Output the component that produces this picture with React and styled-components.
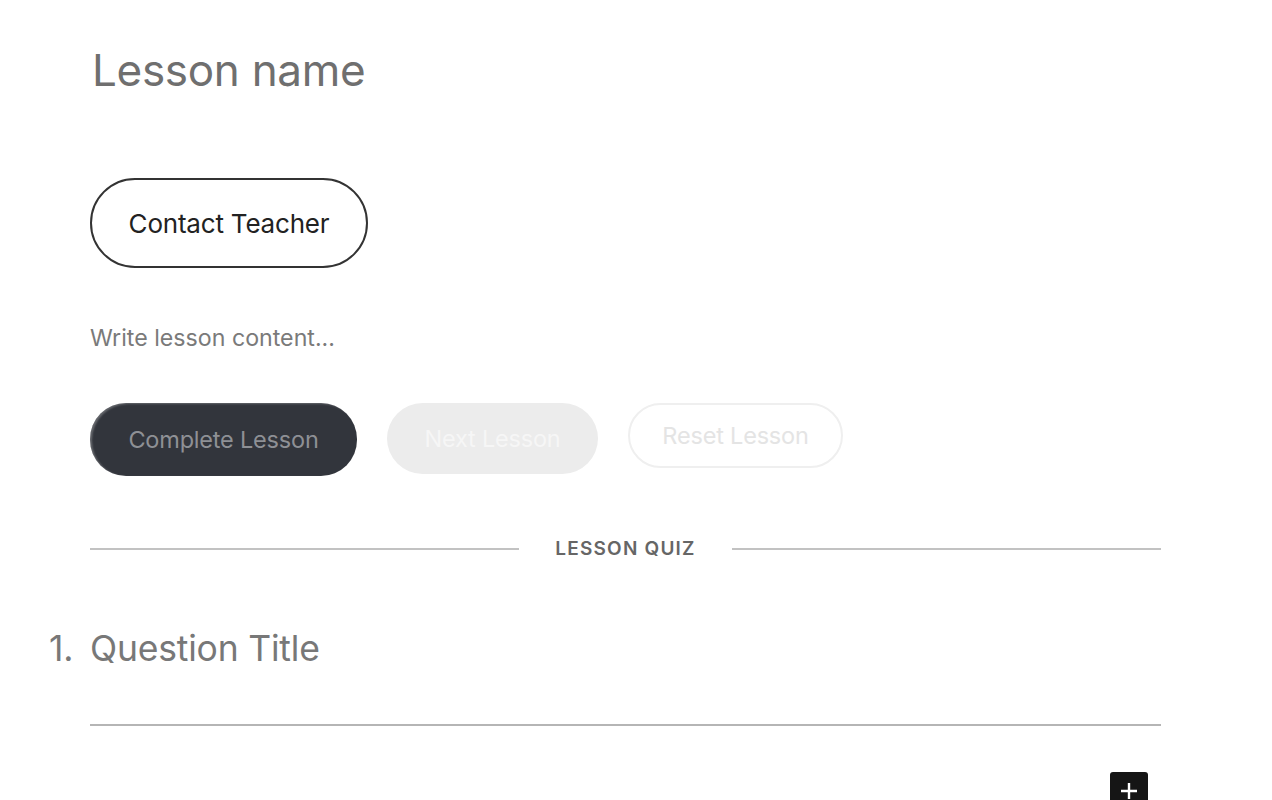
import React from 'react';
import styled, { createGlobalStyle } from 'styled-components';

const Global = createGlobalStyle`
  html, body { margin: 0; padding: 0; background: #fff; }
  body { font-family: Inter, "Noto Sans", sans-serif; -webkit-font-smoothing: antialiased; }
  * { box-sizing: border-box; }
`;

const Page = styled.div`
  width: 1272px; height: 800px; overflow: hidden;
  padding: 44px 0 0 90px;
`;
const Column = styled.div`
  width: 1071px; display: flex; flex-direction: column;
`;
const Title = styled.h1`
  margin: 0 0 0 2px; font-size: 44px; font-weight: 400; color: #6f6f6f;
  line-height: 52px; letter-spacing: -0.3px;
`;
const OutlineButton = styled.button`
  align-self: flex-start; margin-top: 82px;
  width: 278px; height: 90px; border-radius: 45px;
  border: 2px solid #333; background: #fff; color: #222;
  font-family: inherit; font-size: 26px; letter-spacing: -0.2px;
`;
const Placeholder = styled.p`
  margin: 57px 0 0; font-size: 23.2px; color: #7a7a7a; line-height: 26px;
`;
const Actions = styled.div`
  display: flex; gap: 30px; margin-top: 52px; align-items: flex-start;
`;
const Pill = styled.button`
  height: ${p => p.$h || 72}px; width: ${p => p.$w}px; border-radius: 36px;
  font-family: inherit; font-size: 23.5px; letter-spacing: -0.2px;
  background: ${p => p.$bg}; color: ${p => p.$fg};
  border: ${p => p.$border || 'none'};
  box-shadow: ${p => p.$shadow || 'none'};
`;
const Divider = styled.div`
  display: flex; align-items: center; margin-top: 61px; gap: 36px;
  &::before, &::after { content: ''; flex: 1; height: 2px; background: #c2c2c2; }
`;
const DividerLabel = styled.span`
  font-size: 19px; font-weight: 600; color: #666; letter-spacing: 1.2px;
`;
const Question = styled.div`
  display: flex; align-items: baseline; margin: 67px 0 0 -41px;
  font-size: 35.5px; color: #787878; letter-spacing: -0.2px;
`;
const Number = styled.span`
  width: 41px;
`;
const Underline = styled.div`
  height: 2px; background: #b5b5b5; margin-top: 54px;
`;
const AddRow = styled.div`
  display: flex; justify-content: flex-end; padding-right: 13px; margin-top: 46px;
`;
const AddButton = styled.button`
  width: 38px; height: 38px; border-radius: 3px; border: none; background: #151515;
  display: flex; align-items: center; justify-content: center; padding: 0;
`;

export default function App() {
  return (
    <Page>
      <Global />
      <Column>
        <Title>Lesson name</Title>
        <OutlineButton>Contact Teacher</OutlineButton>
        <Placeholder>Write lesson content...</Placeholder>
        <Actions>
          <Pill $w={267} $h={73} $bg="#32353c" $fg="#8e9095" $shadow="inset 2px 1px 2px rgba(255,255,255,0.25)">Complete Lesson</Pill>
          <Pill $w={211} $h={71} $bg="#ececec" $fg="#f6f6f6">Next Lesson</Pill>
          <Pill $w={215} $h={65} $bg="#fff" $fg="#e4e4e4" $border="2px solid #efefef">Reset Lesson</Pill>
        </Actions>
        <Divider><DividerLabel>LESSON QUIZ</DividerLabel></Divider>
        <Question><Number>1.</Number><span>Question Title</span></Question>
        <Underline />
        <AddRow>
          <AddButton aria-label="Add">
            <svg width="20" height="20" viewBox="0 0 20 20">
              <path d="M10 2v16M2 10h16" stroke="#fff" strokeWidth="2.4" />
            </svg>
          </AddButton>
        </AddRow>
      </Column>
    </Page>
  );
}
